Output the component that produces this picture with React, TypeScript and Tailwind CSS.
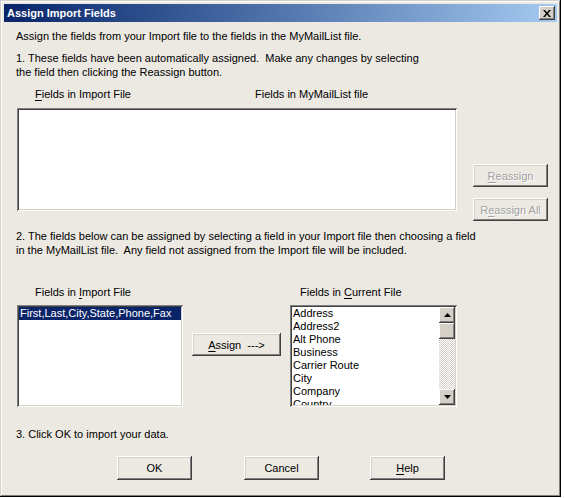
import React from "react"

const raised =
  "shadow-[inset_-1px_-1px_#404040,inset_1px_1px_#ffffff,inset_-2px_-2px_#808080,inset_2px_2px_#d4d0c8]"
const sunken =
  "shadow-[inset_1px_1px_#808080,inset_-1px_-1px_#ffffff,inset_2px_2px_#404040,inset_-2px_-2px_#d4d0c8]"

function U({ children }: { children: React.ReactNode }) {
  return <span className="underline underline-offset-[2px]">{children}</span>
}

function Button({
  children,
  className = "",
  disabled = false,
}: {
  children: React.ReactNode
  className?: string
  disabled?: boolean
}) {
  return (
    <div
      className={`flex items-center justify-center bg-[#ECE9E3] ${raised} ${
        disabled ? "text-[#a0a0a0] [text-shadow:1px_1px_#ffffff]" : "text-black"
      } ${className}`}
    >
      {children}
    </div>
  )
}

function Arrow({ up }: { up?: boolean }) {
  return (
    <div className={`w-[16px] h-[16px] flex items-center justify-center bg-[#d4d0c8] ${raised}`}>
      <svg width="7" height="4" viewBox="0 0 7 4">
        {up ? <path d="M3.5 0 L7 4 L0 4 Z" fill="#000" /> : <path d="M0 0 L7 0 L3.5 4 Z" fill="#000" />}
      </svg>
    </div>
  )
}

const currentFields = ["Address", "Address2", "Alt Phone", "Business", "Carrier Route", "City", "Company", "Country"]

export default function App() {
  return (
    <div className="w-[564px] h-[498px] bg-white">
      <div
        className={`w-[561px] h-[497px] bg-[#ECE9E3] p-[4px] flex flex-col text-[11px] leading-[14px] text-black font-['Liberation_Sans',Arial,sans-serif] shadow-[inset_-1px_-1px_#000000,inset_1px_1px_#d4d0c8,inset_-2px_-2px_#808080,inset_2px_2px_#ffffff]`}
      >
        {/* Title bar */}
        <div className="h-[18px] flex items-center justify-between pl-[3px] pr-[2px] bg-gradient-to-r from-[#0A246A] to-[#A6CAF0]">
          <span className="font-bold text-white text-[11px]">Assign Import Fields</span>
          <div className={`w-[16px] h-[14px] flex items-center justify-center bg-[#d4d0c8] ${raised}`}>
            <svg width="8" height="7" viewBox="0 0 8 7">
              <path d="M0 0 L2 0 L4 2.5 L6 0 L8 0 L5 3.5 L8 7 L6 7 L4 4.5 L2 7 L0 7 L3 3.5 Z" fill="#000" />
            </svg>
          </div>
        </div>

        <div className="pl-[12px] mt-[7px]">Assign the fields from your Import file to the fields in the MyMailList file.</div>
        <div className="pl-[12px] mt-[8px]">
          1. These fields have been automatically assigned.&nbsp; Make any changes by selecting
          <br />
          the field then clicking the Reassign button.
        </div>

        <div className="flex mt-[8px]">
          <div className="ml-[31px] w-[220px]">
            <U>F</U>ields in Import File
          </div>
          <div>Fields in MyMailList file</div>
        </div>

        <div className="flex mt-[7px]">
          <div className={`ml-[13px] w-[440px] h-[103px] bg-white ${sunken}`} />
          <div className="ml-[16px] mt-[56px] flex flex-col gap-[11px]">
            <Button disabled className="w-[75px] h-[23px]">
              <U>R</U>eassign
            </Button>
            <Button disabled className="w-[75px] h-[23px]">
              R<U>e</U>assign All
            </Button>
          </div>
        </div>

        <div className="pl-[12px] mt-[8px]">
          2. The fields below can be assigned by selecting a field in your Import file then choosing a field
          <br />
          in the MyMailList file.&nbsp; Any field not assigned from the Import file will be included.
        </div>

        <div className="flex mt-[28px]">
          <div className="ml-[31px] w-[265px]">
            Fields in <U>I</U>mport File
          </div>
          <div>
            Fields in <U>C</U>urrent File
          </div>
        </div>

        <div className="flex items-start mt-[6px]">
          <div className={`ml-[13px] w-[166px] h-[102px] bg-white p-[2px] ${sunken}`}>
            <div className="h-[13px] leading-[13px] bg-[#0A246A] text-white pl-[1px]">First,Last,City,State,Phone,Fax</div>
          </div>
          <Button className="ml-[9px] mt-[28px] w-[89px] h-[23px]">
            <span>
              <U>A</U>ssign&nbsp; ---&gt;
            </span>
          </Button>
          <div className={`ml-[9px] w-[167px] h-[102px] bg-white p-[2px] flex ${sunken}`}>
            <div className="flex-1 overflow-hidden pl-[1px]">
              {currentFields.map((f) => (
                <div key={f} className="h-[13px] leading-[13px] whitespace-nowrap">
                  {f}
                </div>
              ))}
            </div>
            <div className="w-[16px] flex flex-col">
              <Arrow up />
              <div className={`w-[16px] h-[16px] bg-[#d4d0c8] ${raised}`} />
              <div className="flex-1 bg-[image:repeating-conic-gradient(#d4d0c8_0_25%,#ffffff_0_50%)] bg-[length:2px_2px]" />
              <Arrow />
            </div>
          </div>
        </div>

        <div className="pl-[12px] mt-[20px]">3. Click OK to import your data.</div>

        <div className="flex mt-[15px]">
          <Button className="ml-[113px] w-[75px] h-[24px]">OK</Button>
          <Button className="ml-[52px] w-[75px] h-[24px]">Cancel</Button>
          <Button className="ml-[51px] w-[75px] h-[24px]">
            <span>
              <U>H</U>elp
            </span>
          </Button>
        </div>
      </div>
    </div>
  )
}
